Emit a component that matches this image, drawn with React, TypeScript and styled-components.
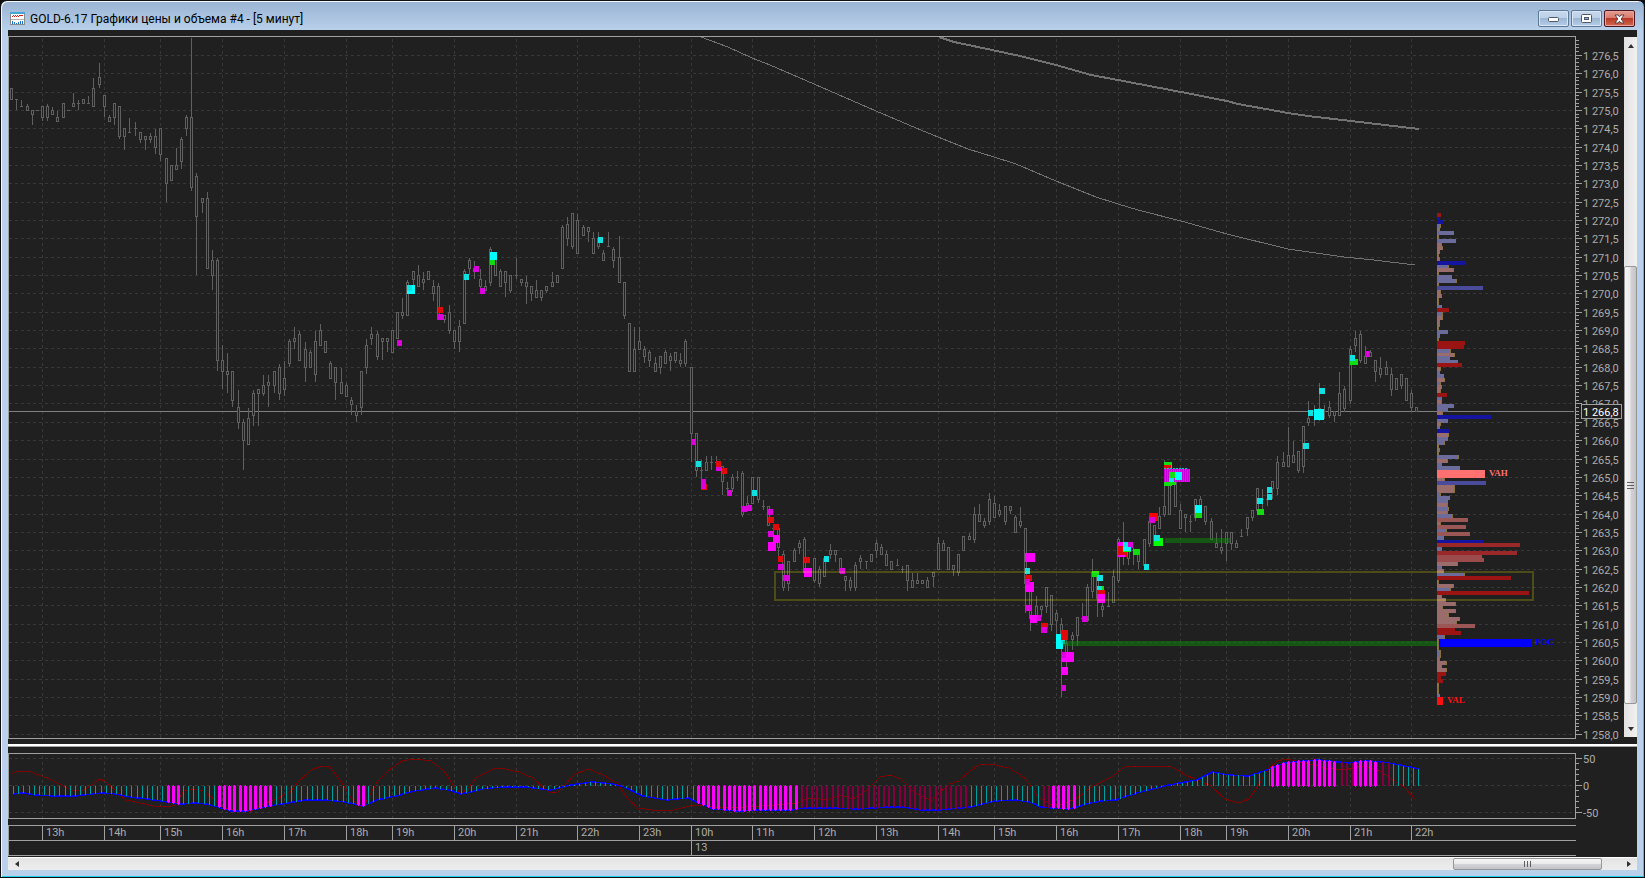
import React from 'react';
import styled, { createGlobalStyle, css } from 'styled-components';

const INK = '#202020';
const LINE = '#a0a0a0';
const GRID = '#383838';
const SCALE_FONT = 'Roboto, "Liberation Sans", sans-serif';

/* ---------- data: coordinates are window pixels ---------- */

const TIMES: [string, number][] = [
  ['13h', 42], ['14h', 104], ['15h', 160], ['16h', 222], ['17h', 284], ['18h', 346],
  ['19h', 392], ['20h', 454], ['21h', 516], ['22h', 577], ['23h', 639], ['10h', 691],
  ['11h', 752], ['12h', 814], ['13h', 876], ['14h', 938], ['15h', 994], ['16h', 1056],
  ['17h', 1118], ['18h', 1180], ['19h', 1226], ['20h', 1288], ['21h', 1350], ['22h', 1411],
];

const PRICES = Array.from({ length: 38 }, (_, i) => ({
  y: Math.floor(55.3 + 18.35 * i),
  label: `1 ${(276.5 - i * 0.5).toFixed(1).replace('.', ',')}`,
}));

// x, high, body top, body bottom, low
const CANDLES = `11 88 88 99 99|16 99 99 99 109|21 100 106 106 106|27 104 106 110 110|32 110 110 114 124|37 110 110 110 110
42 106 106 117 120|47 104 106 117 120|52 107 110 114 114|57 111 117 121 121|63 103 103 117 117|68 110 110 110 110
73 93 103 106 106|78 100 103 103 109|83 99 99 103 103|88 96 103 103 103|93 78 88 106 106|99 63 77 84 87
104 95 95 106 116|109 115 117 121 121|114 103 103 117 124|119 106 106 136 138|124 128 128 136 149|129 118 132 132 132
135 122 128 128 135|140 132 132 139 142|145 136 136 139 149|150 133 136 139 142|155 129 136 147 153|160 128 128 154 160
166 158 158 183 201|171 165 165 180 180|176 148 165 169 169|181 137 139 161 168|186 115 117 128 135|191 38 117 187 190
196 173 176 216 274|202 198 198 202 212|207 192 198 268 268|212 250 260 275 289|217 258 260 360 370|222 345 360 371 388
227 353 371 374 392|232 371 371 400 406|238 390 407 422 428|243 419 422 440 469|248 408 418 444 444|253 390 393 415 425
258 389 389 393 425|263 375 385 393 395|268 375 382 385 406|274 371 371 385 392|279 364 367 393 399|284 361 378 389 395
289 339 341 363 366|294 327 338 341 348|299 331 334 360 360|305 342 349 367 381|310 350 352 367 367|315 331 341 374 381
320 324 330 345 345|325 341 341 352 352|330 361 363 378 378|335 367 367 382 399|341 368 382 393 393|346 383 385 396 396
351 397 400 404 414|356 405 411 415 421|361 371 371 407 414|366 339 345 367 373|371 327 334 338 344|377 331 334 356 359
382 338 338 341 359|387 338 338 341 351|392 330 330 352 352|397 312 312 338 338|402 298 312 315 318|407 280 282 315 315
413 271 271 279 285|418 265 275 286 286|423 272 279 282 289|428 271 271 279 279|433 280 286 293 300|438 283 286 318 318
444 315 315 319 322|449 305 312 330 333|454 330 330 341 348|459 320 326 341 351|464 269 271 323 323|469 258 260 268 274
474 261 268 271 278|480 269 279 286 288|485 280 286 290 290|490 247 249 282 285|495 258 258 275 275|500 269 271 286 286
505 271 271 282 296|510 275 275 290 292|516 258 275 275 278|521 279 279 282 285|526 276 282 286 303|531 286 286 293 300
536 280 290 297 297|541 290 290 297 300|546 286 286 290 292|552 272 282 286 286|557 275 275 282 282|562 225 227 268 268
567 217 224 238 245|572 213 213 246 248|577 214 220 253 253|583 225 227 235 235|588 227 227 231 241|593 232 238 253 253
598 232 238 246 248|603 250 253 260 260|608 232 246 246 246|613 247 249 260 267|619 236 257 282 282|624 282 282 315 318
629 323 323 371 371|634 327 349 371 371|639 327 341 349 349|644 346 349 356 362|649 350 352 360 366|655 357 363 371 371
660 356 356 367 373|665 350 352 363 363|670 353 356 360 370|675 352 352 360 362|680 353 360 363 366|685 339 341 363 366
691 367 367 433 461|696 433 433 470 476|701 460 470 470 480|706 456 462 470 470|711 456 462 462 469|716 456 462 462 462
722 466 466 481 494|727 482 488 488 490|732 474 477 488 491|737 471 477 477 480|742 471 473 514 516|747 496 503 505 505
752 477 477 503 503|758 477 477 499 502|763 500 506 506 509|768 506 506 525 525|773 528 528 528 540|778 528 528 547 556
783 551 554 587 590|788 561 561 583 590|794 548 550 561 561|799 540 543 547 553|804 537 539 572 572|814 558 558 580 582
819 566 569 583 586|824 558 558 576 576|830 544 550 554 558|835 550 550 554 561|840 558 558 572 572|845 576 576 580 590
850 577 580 587 590|855 562 565 587 590|860 555 558 561 568|866 561 561 561 568|871 554 554 561 561|876 540 543 550 557
881 544 547 554 554|886 551 554 565 565|891 561 561 569 569|897 559 565 565 565|902 566 569 569 572|907 565 565 580 590
912 573 580 587 587|917 573 580 583 583|922 580 580 583 583|927 577 580 587 587|933 572 572 576 586|938 537 543 569 569
943 540 543 550 550|948 547 547 569 569|953 565 565 569 575|958 554 554 572 575|963 536 536 550 550|969 533 536 539 539
974 507 514 539 542|979 504 514 521 521|984 518 521 525 527|989 493 499 521 524|994 496 503 517 517|999 504 510 514 516
1005 506 506 521 524|1010 506 506 510 513|1015 515 517 532 532|1020 507 521 525 527|1025 528 528 583 612|1030 588 588 618 630
1036 596 606 616 616|1041 606 606 609 616|1046 587 587 606 612|1051 595 595 624 630|1056 610 613 620 640|1061 618 624 640 696
1066 633 643 657 667|1072 632 635 639 649|1077 617 617 635 645|1082 603 618 618 618|1087 584 587 620 620|1092 559 572 591 597
1097 573 573 598 616|1102 603 606 609 616|1108 592 606 606 606|1113 570 576 602 602|1118 537 539 580 582|1123 522 545 545 564
1128 551 551 558 564|1133 548 550 550 564|1138 551 551 561 568|1144 539 539 565 565|1149 521 521 543 546|1154 525 525 545 545
1159 507 516 528 528|1164 460 506 514 516|1169 483 483 514 514|1175 478 478 506 506|1180 504 510 528 528|1185 514 514 517 531
1190 515 521 521 531|1195 499 499 517 520|1200 496 499 517 517|1205 506 506 521 524|1211 518 521 539 539|1216 533 543 547 547
1221 529 547 550 553|1226 532 532 543 560|1231 532 532 543 549|1236 540 543 547 547|1241 529 536 536 536|1247 517 517 528 535
1252 510 510 517 520|1257 488 488 510 510|1262 489 499 499 508|1267 489 499 499 505|1272 481 481 488 498|1277 456 462 488 494
1283 452 462 466 466|1288 427 455 466 466|1293 441 455 462 462|1298 451 451 470 472|1303 426 426 466 472|1308 401 418 422 425
1314 405 411 411 425|1319 383 408 408 420|1324 405 411 411 418|1329 401 407 415 417|1334 411 411 415 421|1339 372 393 415 415
1344 386 389 408 411|1350 346 349 400 403|1355 331 338 345 351|1360 331 334 360 362|1365 346 356 363 363|1370 350 352 356 356
1375 360 360 371 381|1380 357 368 374 377|1386 361 367 374 374|1391 368 374 389 395|1396 378 378 389 389|1401 374 374 385 388
1406 378 378 400 400|1411 390 393 407 411|1416 407 407 411 411`
  .split(/[|\n]/)
  .map((row) => row.trim().split(' ').map(Number));

const TONES: Record<string, string> = {
  c: '#10e0e0', C: '#00ffff', m: '#dc00dc', M: '#ff00ff', r: '#e00a0a', R: '#ff0000', g: '#10dc10', G: '#00ff00',
};

// x, y, width, height, tone
const MARKS = `407 285 8 9 C|407 285 5 6 c|397 340 5 6 m|438 307 5 6 r|437 314 6 6 m|464 274 5 6 c|474 266 5 6 m|480 288 5 6 m|490 252 7 8 C|490 260 5 5 g
598 237 5 6 c|691 439 5 6 m|696 461 5 6 c|701 484 6 6 r|701 479 5 10 m|716 461 5 6 r|716 467 5 4 m|722 468 5 6 r|727 490 5 6 m
752 490 5 6 c|742 506 5 6 m|747 505 5 6 m|768 509 5 6 m|768 517 6 6 r|773 524 6 6 r|768 531 5 6 m|773 535 7 8 M|768 542 8 9 M
778 556 5 6 r|778 564 6 6 m|783 575 6 6 m|804 557 6 6 r|804 568 8 9 M|824 556 5 6 c|840 568 5 6 m|1025 553 10 9 M|1025 568 5 6 c
1025 575 7 6 r|1025 582 9 10 M|1025 579 5 6 m|1025 605 6 6 m|1036 615 5 6 m|1030 615 7 8 M|1041 623 7 6 r|1041 627 6 6 m
1056 634 7 15 C|1061 640 4 4 c|1061 630 7 10 r|1061 652 13 10 M|1061 652 5 6 m|1061 667 7 8 M|1061 685 5 6 m|1082 616 6 6 m|1092 571 7 6 g
1097 575 6 6 c|1097 586 5 4 c|1102 586 2 4 g|1097 590 8 4 r|1097 594 8 9 M|1118 542 5 4 M|1128 542 5 6 m|1118 546 9 11 r
1118 555 7 2 M|1123 542 5 6 c|1123 547 8 4 C|1123 551 8 1 G|1133 549 7 6 g|1144 564 5 6 c|1149 513 9 8 R|1149 517 6 6 m
1154 538 9 8 G|1154 535 6 6 c|1164 462 8 7 g|1164 465 7 4 r|1164 482 8 4 g|1172 480 4 5 g|1195 505 7 8 C|1195 513 7 5 g
1257 498 6 6 c|1257 509 7 6 g|1267 487 5 6 c|1267 494 5 6 c|1303 443 6 6 c|1308 410 5 6 c|1314 409 10 11 C|1319 388 6 6 c
1350 359 8 6 g|1350 355 5 6 c|1365 351 5 6 m`
  .split(/[|\n]/)
  .map((row) => row.trim().split(' '));

// top, length and hue of every price step of the volume profile
const HUES: Record<string, string> = {
  r: '#9b1414', b: '#1414a0', s: '#6c6c9c', p: '#9b6c6c', t: '#8c7464', v: '#4b4b9b', q: '#9b5656', w: '#9b2828', e: '#9b4b4b',
};
const PROFILE = `213 4 r|217 3 b|220 6 b|224 4 s|228 3 t|231 17 s|235 2 t|239 19 s|243 5 p|246 6 p|250 3 p|254 2 t|257 3 p|261 29 b|265 12 s|268 17 p
272 2 t|275 15 s|279 20 s|283 2 t|286 46 v|290 4 p|294 5 p|298 2 t|301 2 t|305 5 s|308 12 r|312 6 s|316 6 p|320 3 p|323 3 t|327 2 t
330 11 s|334 3 s|338 2 s|341 28 r|345 27 r|349 14 s|353 18 p|356 13 s|360 21 s|363 25 r|367 4 p|371 3 s|374 7 s|378 8 p|382 4 s
385 5 p|389 4 p|393 10 r|397 5 s|400 5 p|404 17 s|408 11 s|411 6 p|415 54 b|419 11 s|422 4 p|426 3 s|429 12 b|433 12 p|437 11 s
441 8 s|444 2 t|448 3 t|452 2 t|455 22 s|459 11 p|463 5 s|466 23 s|470 8 p|474 8 p|478 8 p|481 49 v|485 18 p|489 18 p|492 4 s
496 13 s|500 11 s|503 11 p|507 12 s|511 11 p|514 16 s|518 31 q|522 4 p|525 29 q|529 10 s|532 33 q|536 7 s|540 46 b|543 83 w
547 5 s|551 80 w|555 45 e|558 47 e|562 21 p|566 5 s|569 7 p|573 28 s|576 74 r|580 2 t|584 17 p|588 14 s|591 92 r|595 5 p|598 9 p
602 19 p|606 6 p|609 19 p|613 12 p|617 23 p|621 20 p|624 38 q|628 18 r|631 24 r|635 8 s|639 2 t|643 2 t|646 2 t|650 4 s|654 4 s
657 3 p|661 10 p|665 5 p|668 10 p|672 9 r|676 4 r|679 6 r|683 2 t|687 2 s|690 2 t|694 3 s`
  .split(/[|\n]/)
  .map((row) => row.trim().split(' '));

const SLOW_AVERAGE =
  '939,37 954,42 992,50 1020,56 1056,65 1091,75 1118,80 1181,92 1227,101 1238,104 1288,113 1308,116 1351,121 1419,129';
const FAST_AVERAGE =
  '701,37 728,47 752,58 770,65 814,84 876,111 902,122 916,128 938,137 968,149 994,157 1016,164 1056,181 1096,197 1118,204 1138,210 1181,221 1227,234 1288,249 1344,257 1374,260 1415,265';

const parse = (s: string) => s.split(' ').map((p) => p.split(',').map(Number));

const OSC = `13,794 23,793 35,795 54,796 75,796 91,794 102,793 116,794 130,797 147,799 161,801 168,802 181,804 196,803 207,804 221,808 231,811 246,811 256,809 274,805 288,803 305,800 326,800 345,802 363,806 377,800 396,796 414,791 435,788 449,790 461,794 470,792 482,789 502,787 526,787 550,790 571,785 592,782 613,784 627,788 643,796 666,800 688,798 699,803 713,809 739,811 760,810 792,810 802,808 830,808 858,809 890,807 904,807 922,810 939,810 971,807 995,801 1016,800 1029,802 1041,807 1051,808 1069,809 1087,804 1100,801 1116,800 1130,795 1148,790 1165,786 1179,783 1197,780 1212,772 1228,775 1249,776 1267,770 1284,763 1305,761 1319,760 1348,763 1365,761 1383,762 1400,765 1419,769`;
const SIGNAL = `11,774 18,771 28,771 42,776 56,782 72,790 84,790 100,779 105,781 116,791 126,800 140,803 154,806 167,807 175,805 184,791 193,789 203,791 210,796 224,808 238,811 251,811 263,804 277,799 291,791 298,782 310,771 321,766 330,767 344,786 351,798 360,807 365,804 377,782 389,770 402,761 414,759 431,761 444,771 454,786 461,794 468,788 477,777 495,768 505,769 519,772 533,778 544,788 550,792 557,793 564,786 575,774 589,769 603,775 617,783 627,798 638,808 652,810 673,810 694,805 715,807 746,807 774,805 796,803 810,798 827,800 841,795 853,799 866,791 880,777 890,775 901,779 915,793 932,801 939,793 950,784 959,781 971,770 980,765 990,764 1009,768 1024,777 1038,797 1052,805 1062,804 1076,799 1090,788 1113,776 1125,767 1137,766 1158,766 1172,767 1186,775 1211,786 1225,799 1239,803 1249,799 1258,786 1267,770 1277,761 1286,759 1305,763 1326,768 1344,770 1362,766 1376,769 1390,778 1404,787 1416,800`;

const OSC_POINTS = parse(OSC);
const oscAt = (x: number) => {
  const i = Math.max(1, OSC_POINTS.findIndex((p) => p[0] >= x));
  const [x0, y0] = OSC_POINTS[i - 1];
  const [x1, y1] = OSC_POINTS[i];
  return Math.round(y0 + ((y1 - y0) * (x - x0)) / (x1 - x0));
};

const HOT = [[166, 176], [217, 269], [356, 361], [696, 794], [1051, 1072], [1272, 1334], [1355, 1376]];
const WARM = [[799, 963], [1041, 1046], [1339, 1350], [1380, 1386]];
const within = (ranges: number[][], x: number) => ranges.some(([a, b]) => x >= a && x <= b);
const BAR_X = [...CANDLES.map((c) => c[0]), 809].sort((a, b) => a - b);

/* ---------- window chrome ---------- */

const GlobalStyle = createGlobalStyle`
  *, *::before, *::after { box-sizing: border-box; }
  html, body { margin: 0; background: #101014; }
`;

const Frame = styled.main`
  display: flex;
  flex-direction: column;
  min-height: 100vh;
  padding: 0 7px 7px;
  border: 1px solid #101014;
  border-radius: 7px 7px 0 0;
  background: linear-gradient(#9ab3d3, #b9d1ea 30px, #b9d1ea);
  box-shadow: inset 1px 1px 0 #f4f9ff, inset -1px -1px 0 #20cfee;
`;

const TitleBar = styled.header`
  display: flex;
  align-items: center;
  height: 29px;
  padding: 6px 2px 0;
`;

const Title = styled.h1`
  flex: 1;
  margin: 0 0 0 5px;
  overflow: hidden;
  color: #000;
  font: 400 12px/18px Roboto, "Noto Sans", sans-serif;
  white-space: nowrap;
`;

const WindowButtons = styled.div`
  display: flex;
  gap: 2px;
`;

const WindowButton = styled.button<{ $danger?: boolean }>`
  display: grid;
  place-items: center;
  width: 31px;
  height: 17px;
  padding: 0;
  border: 1px solid ${(p) => (p.$danger ? '#4c1620' : '#5d7896')};
  border-radius: 2px;
  box-shadow: inset 0 0 0 1px ${(p) => (p.$danger ? '#e8a49c' : '#d8e6f5')};
  background: ${(p) =>
    p.$danger
      ? 'linear-gradient(#e59c90, #d9796c 48%, #b93a26 50%, #d06a50)'
      : 'linear-gradient(#c6d8ec, #bcd0e8 48%, #9cb6d4 50%, #b6cde6)'};
`;

const Client = styled.section`
  display: flex;
  flex: 1;
  flex-direction: column;
  min-width: 0;
  padding-top: 6px;
  background: ${INK};
`;

const PriceRow = styled.div`
  display: flex;
  flex: 1 0 703px;
`;

const IndicatorRow = styled.div`
  display: flex;
  height: 66px;
  margin: 6px 13px 6px 0;
`;

const Plot = styled.div`
  position: relative;
  flex: 1;
  min-width: 0;
  border: 1px solid ${LINE};
`;

const Scale = styled.div`
  position: relative;
  flex: 0 0 48px;
`;

const Drawing = styled.svg<{ $spill?: boolean }>`
  position: absolute;
  inset: 0;
  width: 100%;
  height: 100%;
  overflow: ${(p) => (p.$spill ? 'visible' : 'hidden')};
`;

const Splitter = styled.div`
  flex: 0 0 3px;
  margin-top: 5px;
  border-bottom: 1px solid ${LINE};
  background: #fff;
`;

const TimeAxis = styled.div`
  flex: 0 0 31px;
  margin: 0 61px 1px 0;
  border: solid ${LINE};
  border-width: 1px 0 1px 1px;
`;

const TimeRow = styled.ol<{ $ruled?: boolean }>`
  display: flex;
  height: ${(p) => (p.$ruled ? 15 : 14)}px;
  margin: 0;
  padding: 0;
  overflow: hidden;
  list-style: none;
  ${(p) => p.$ruled && css`border-bottom: 1px solid ${LINE};`}
`;

const TimeCell = styled.li<{ $width: number; $blank?: boolean }>`
  flex: 0 0 ${(p) => p.$width}px;
  padding-left: 3px;
  border-left: ${(p) => (p.$blank ? 'none' : `1px solid ${LINE}`)};
  color: #acacac;
  font: 11px/14px ${SCALE_FONT};
  white-space: nowrap;
`;

/* ---------- scroll bars ---------- */

const Track = styled.div<{ $vertical?: boolean }>`
  display: flex;
  ${(p) =>
    p.$vertical
      ? css`
          flex: 0 0 13px;
          flex-direction: column;
          margin: 1px 0 2px;
          background: linear-gradient(90deg, #e2e2e2, #f0f0f0);
        `
      : css`
          flex: 0 0 13px;
          border-top: 1px solid #fff;
          background: linear-gradient(#e4e4e4, #ededed);
        `}
`;

const ArrowButton = styled.button`
  display: grid;
  place-items: center;
  flex: 0 0 17px;
  padding: 0;
  border: 0;
  background: transparent;
`;

const Slack = styled.div<{ $grow?: boolean; $size?: number }>`
  flex: ${(p) => (p.$grow ? '1 1 0' : `0 0 ${p.$size}px`)};
`;

const Thumb = styled.div<{ $vertical?: boolean; $size: number }>`
  display: grid;
  place-items: center;
  flex: 0 0 ${(p) => p.$size}px;
  border: 1px solid #979797;
  border-radius: 2px;
  background: linear-gradient(${(p) => (p.$vertical ? '90deg' : '180deg')}, #f5f5f5, #e9e9eb 48%, #d4d4d8 52%, #c4c4c8);
`;

type ScrollProps = { vertical?: boolean; lead?: number; size: number; tail?: number; label: string };

const Arrow = ({ d }: { d: string }) => (
  <svg width="8" height="8" viewBox="0 0 8 8" aria-hidden="true">
    <path d={d} fill="#303030" />
  </svg>
);

function ScrollBar({ vertical, lead, size, tail, label }: ScrollProps) {
  return (
    <Track
      $vertical={vertical}
      role="scrollbar"
      aria-label={label}
      aria-controls="price-plot"
      aria-valuenow={50}
      aria-orientation={vertical ? 'vertical' : 'horizontal'}
    >
      <ArrowButton type="button" aria-label="Back">
        <Arrow d={vertical ? 'M4 2 L7 6 H1 Z' : 'M2 4 L6 1 V7 Z'} />
      </ArrowButton>
      {vertical ? <Slack $size={lead} /> : <Slack $grow />}
      <Thumb $vertical={vertical} $size={size}>
        <svg width="8" height="8" viewBox="0 0 8 8" shapeRendering="crispEdges" aria-hidden="true">
          <path
            d={vertical ? 'M0 1H7V2H0Z M0 4H7V5H0Z M0 7H7V8H0Z' : 'M0 1V7H1V1Z M3 1V7H4V1Z M6 1V7H7V1Z'}
            fill="#606060"
          />
        </svg>
      </Thumb>
      {vertical ? <Slack $grow /> : <Slack $size={tail} />}
      <ArrowButton type="button" aria-label="Forward">
        <Arrow d={vertical ? 'M4 6 L1 2 H7 Z' : 'M6 4 L2 1 V7 Z'} />
      </ArrowButton>
    </Track>
  );
}

/* ---------- charts ---------- */

const Label = styled.text<{ $current?: boolean }>`
  font: 11px ${SCALE_FONT};
  fill: ${(p) => (p.$current ? '#fff' : '#acacac')};
`;

const ZoneLabel = styled.text`
  font: 900 9px "Liberation Serif", "DejaVu Serif", serif;
`;

function TimeGrid({ top, bottom }: { top: number; bottom: number }) {
  return (
    <path
      d={TIMES.map(([, x]) => `M${x}.5 ${top}V${bottom}`).join('')}
      stroke={GRID}
      strokeDasharray="3 3"
      fill="none"
    />
  );
}

function Candles() {
  return (
    <g stroke="#606060" fill={INK}>
      {CANDLES.map(([x, high, top, bottom, low]) => (
        <React.Fragment key={x}>
          <path d={`M${x + 0.5} ${high}V${low + 1}`} />
          {top === bottom ? (
            <path d={`M${x - 1} ${top + 0.5}h3`} />
          ) : (
            <rect x={x - 0.5} y={top + 0.5} width={2} height={bottom - top} />
          )}
        </React.Fragment>
      ))}
    </g>
  );
}

function VolumeProfile() {
  return (
    <g>
      {PROFILE.map(([y, w, hue]) => (
        <React.Fragment key={y}>
          <rect x={1437} y={+y} width={+w} height={4} fill={HUES[hue]} />
          {'spt'.includes(hue) && <rect x={1436 + +w} y={+y} width={1} height={4} fill="#8a7040" />}
        </React.Fragment>
      ))}
      <rect x={1437} y={470} width={48} height={8} fill="#ff7070" />
      <rect x={1439} y={639} width={92} height={8} fill="#0000ff" />
      <rect x={1437} y={697} width={6} height={8} fill="#ff1010" />
      <ZoneLabel x={1489} y={476} fill="#ff7070">VAH</ZoneLabel>
      <ZoneLabel x={1535} y={645} fill="#0000ff">POC</ZoneLabel>
      <ZoneLabel x={1447} y={703} fill="#ff1010">VAL</ZoneLabel>
    </g>
  );
}

function PriceChart() {
  return (
    <Drawing id="price-plot" role="img" aria-label="Price, 5 minutes" shapeRendering="crispEdges">
      <g transform="translate(-9 -37)">
        <path d={PRICES.map(({ y }) => `M9 ${y}.5H1573`).join('')} stroke={GRID} strokeDasharray="3 3" />
        <TimeGrid top={39} bottom={738} />
        <path d="M9 411.5H1574" stroke="#808080" />
        <polyline points={SLOW_AVERAGE} fill="none" stroke="#727272" strokeWidth={2} />
        <polyline points={FAST_AVERAGE} fill="none" stroke="#727272" />
        <Candles />
        {MARKS.map(([x, y, w, h, tone], i) => (
          <rect key={i} x={x} y={y} width={w} height={h} fill={TONES[tone]} />
        ))}
        <g>
          <path d="M1164 468.5h24" stroke="#00d0d0" strokeDasharray="2 1" />
          <rect x={1164} y={469} width={26} height={13} fill="#ff00ff" />
          <path d="M1164 475.5h26" stroke="#c800d8" strokeWidth={13} strokeDasharray="1 1" />
          <rect x={1169} y={472} width={6} height={6} fill="#10dc10" />
          <rect x={1169} y={478} width={5} height={4} fill="#10e0e0" />
          <rect x={1175} y={472} width={7} height={8} fill="#00ffff" />
        </g>
        <g fill="#0a8c0a" fillOpacity={0.5}>
          <rect x={1165} y={538} width={65} height={5} />
          <rect x={1063} y={641} width={374} height={5} />
        </g>
        <VolumeProfile />
        <rect x={775} y={572} width={758} height={28} fill="none" stroke="#ffff00" strokeOpacity={0.2} strokeWidth={2} />
      </g>
    </Drawing>
  );
}

const PRICE_TICKS = Array.from({ length: 190 }, (_, i) => Math.floor(40.62 + i * 3.67)).filter((y) => y < 737);

function PriceScale() {
  return (
    <Drawing $spill role="img" aria-label="Price scale">
      <g transform="translate(-1576 -36)">
        <g shapeRendering="crispEdges" stroke={LINE}>
          <path d={PRICE_TICKS.map((y) => `M1576 ${y}.5h3`).join('')} />
          <path d={PRICES.map(({ y }) => `M1576 ${y}.5h6`).join('')} />
        </g>
        {PRICES.map(({ y, label }) => (
          <Label key={label} x={1583} y={y + 5}>{label}</Label>
        ))}
        <rect x={1581.5} y={404.5} width={40} height={14} fill={INK} stroke={LINE} />
        <Label x={1583} y={416} $current>1 266,8</Label>
      </g>
    </Drawing>
  );
}

function Oscillator() {
  return (
    <Drawing role="img" aria-label="Oscillator" shapeRendering="crispEdges">
      <g transform="translate(-9 -754)">
        <path d="M9 758.5H1573M9 785.5H1573M9 812.5H1573" stroke={GRID} strokeDasharray="3 3" />
        <TimeGrid top={756} bottom={818} />
        <polyline points={SIGNAL} fill="none" stroke="#800000" />
        <polyline points={OSC} fill="none" stroke="#0000ff" strokeWidth={1.5} />
        {BAR_X.map((c) => {
          const y = oscAt(c + 2);
          const top = Math.min(y, 786);
          const height = Math.abs(y - 786);
          if (within(HOT, c)) {
            const x = y < 786 ? c : c + 2;
            return (
              <path key={c} fill="#ff00ff" d={`M${x - 1} ${top}h3v${height}h-3ZM${x} ${top - 1}h1v${height + 2}h-1Z`} />
            );
          }
          return within(WARM, c) ? (
            <rect key={c} x={c + 2} y={top} width={2} height={height} fill="#800040" />
          ) : (
            <rect key={c} x={c + 2} y={top} width={1} height={height} fill="#00a0a0" />
          );
        })}
      </g>
    </Drawing>
  );
}

function OscillatorScale() {
  return (
    <Drawing $spill role="img" aria-label="Oscillator scale">
      <g transform="translate(-1576 -753)">
        <path
          d="M1576 758.5h6M1576 785.5h6M1576 812.5h6M1576 763.5h3M1576 769.5h3M1576 774.5h3M1576 780.5h3M1576 790.5h3M1576 796.5h3M1576 801.5h3M1576 807.5h3"
          stroke={LINE}
          shapeRendering="crispEdges"
        />
        <Label x={1583} y={763}>50</Label>
        <Label x={1583} y={790}>0</Label>
        <Label x={1583} y={817}>-50</Label>
      </g>
    </Drawing>
  );
}

const AppIcon = () => (
  <svg width="15" height="13" viewBox="0 0 15 13" shapeRendering="crispEdges" aria-hidden="true">
    <path d="M0 0h15v13H0Z" fill="#8a8a8a" />
    <path d="M0 0h15v2H0Z" fill="#46a6d6" />
    <path d="M1 2h13v10H1Z" fill="#fff" />
    <path d="M2 4h1v1H2ZM3 3h1v1H3ZM4 4h1v1H4ZM5 3h1v1H5ZM6 4h1v1H6ZM7 3h1v1H7ZM8 4h1v1H8ZM9 3h4v1H9Z" fill="#d02020" />
    <path d="M1 7h13v1H1Z" fill="#b0b0b0" />
    <path d="M2 9h1v3H2ZM4 10h1v2H4ZM6 11h1v1H6ZM8 10h1v2H8ZM10 9h1v3h-1ZM12 9h1v3h-1Z" fill="#2070c0" />
  </svg>
);

export default function App() {
  return (
    <>
      <GlobalStyle />
      <Frame>
        <TitleBar>
          <AppIcon />
          <Title>GOLD-6.17 Графики цены и объема #4 - [5 минут]</Title>
          <WindowButtons>
            <WindowButton type="button" aria-label="Minimize">
              <svg width="11" height="6" viewBox="0 0 11 6" aria-hidden="true">
                <rect x="0.5" y="1.5" width="10" height="4" rx="1" fill="#fff" stroke="#4e5868" />
              </svg>
            </WindowButton>
            <WindowButton type="button" aria-label="Maximize">
              <svg width="11" height="9" viewBox="0 0 11 9" aria-hidden="true">
                <rect x="0.5" y="0.5" width="10" height="8" rx="1" fill="#fff" stroke="#4e5868" />
                <rect x="3.5" y="3.5" width="4" height="2" fill="#8fa8c8" stroke="#4e5868" />
              </svg>
            </WindowButton>
            <WindowButton type="button" aria-label="Close" $danger>
              <svg width="11" height="10" viewBox="0 0 11 10" aria-hidden="true">
                <path d="M1 1h3l1.500 1.800L7 1h3L7.200 5 10 9H7L5.500 7.200 4 9H1l2.800-4Z" fill="#fff" stroke="#554048" />
              </svg>
            </WindowButton>
          </WindowButtons>
        </TitleBar>

        <Client>
          <PriceRow>
            <Plot><PriceChart /></Plot>
            <Scale><PriceScale /></Scale>
            <ScrollBar vertical label="Price" lead={212} size={438} />
          </PriceRow>
          <Splitter role="separator" />
          <IndicatorRow>
            <Plot><Oscillator /></Plot>
            <Scale><OscillatorScale /></Scale>
          </IndicatorRow>
          <TimeAxis>
            <TimeRow $ruled>
              <TimeCell $width={33} $blank />
              {TIMES.map(([hour, x], i) => (
                <TimeCell key={x} $width={(TIMES[i + 1]?.[1] ?? x + 60) - x}>{hour}</TimeCell>
              ))}
            </TimeRow>
            <TimeRow>
              <TimeCell $width={682} $blank />
              <TimeCell $width={60}>13</TimeCell>
            </TimeRow>
          </TimeAxis>
          <ScrollBar label="Time" size={149} tail={18} />
        </Client>
      </Frame>
    </>
  );
}
